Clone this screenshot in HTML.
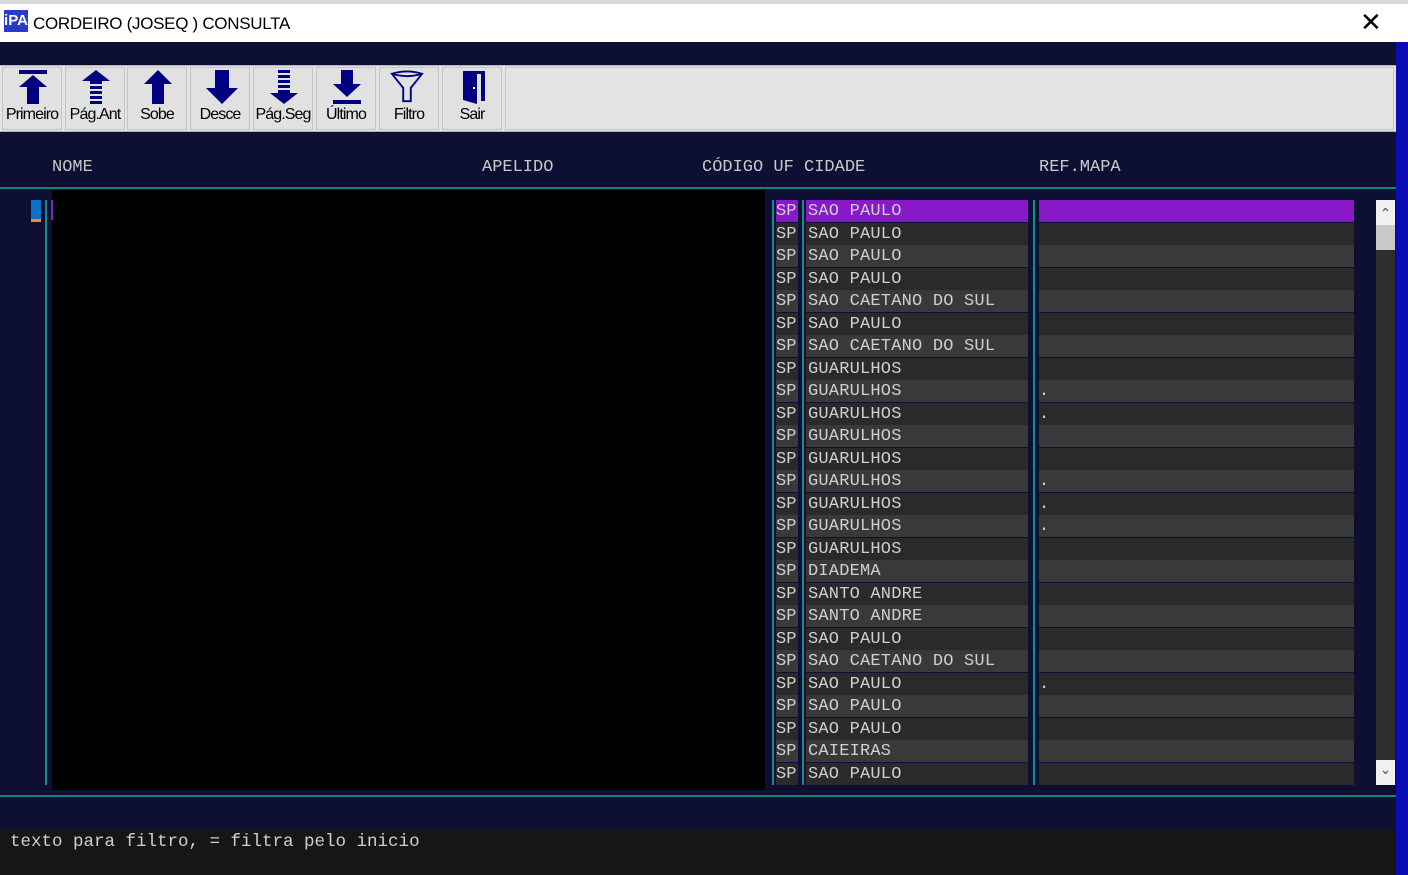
<!DOCTYPE html>
<html><head><meta charset="utf-8"><style>
*{margin:0;padding:0;box-sizing:border-box}
body{width:1408px;height:875px;overflow:hidden;background:#0e1033;position:relative;font-family:"Liberation Mono","DejaVu Sans Mono",monospace}
.abs{position:absolute}
#top{left:0;top:0;width:1408px;height:4px;background:#d8d8d8}
#title{left:0;top:4px;width:1408px;height:38px;background:#fff;font-family:"Liberation Sans",sans-serif;font-size:17px;color:#000}
#blue{left:1396px;top:42px;width:12px;height:833px;background:#0c0cb5}
#tb{left:0;top:65px;width:1396px;height:67px;background:#e4e4e4;border-top:1px solid #b0b0b0;border-bottom:1px solid #b0b0b0}
.btn{position:absolute;top:67px;width:60px;height:63px;background:#e1e1e1;border:1px solid #c4c4c4;font-family:"Liberation Sans",sans-serif;font-size:16px;color:#000;text-align:center;letter-spacing:-0.9px}
.btn svg{position:absolute;left:14px;top:2px}
.btn span{position:absolute;left:0;right:0;top:38px}
.hd{position:absolute;top:158px;color:#c8c8c8;font-size:17px}
.row{position:absolute;height:22px;font-size:17px;color:#cfcfcf;line-height:24px;white-space:pre}
.t{position:absolute;background:#10908a;width:2px}
</style></head><body>
<div class="abs" id="top"></div>
<div class="abs" id="title">
 <div class="abs" style="left:4px;top:6px;width:24px;height:22px;background:#2a3bc6;color:#fff;font-weight:bold;font-size:15px;line-height:22px;text-align:center">iPA</div>
 <div class="abs" style="left:33px;top:10px;letter-spacing:-0.3px">CORDEIRO (JOSEQ ) CONSULTA</div>
 <div class="abs" style="left:1360px;top:3px;font-size:26px;font-weight:300">✕</div>
</div>
<div class="abs" id="blue"></div>
<div class="abs" id="tb"></div>
<div class="abs" style="left:505px;top:67px;width:889px;height:63px;border:1px solid #c4c4c4;background:#e4e4e4"></div>

<div class="btn" style="left:2px"><svg width="32" height="34" viewBox="0 0 32 34"><rect x="2" y="0" width="28" height="4" fill="#000080"/><path d="M16 5 L30 17 L22 17 L22 34 L10 34 L10 17 L2 17Z" fill="#000080"/></svg><span>Primeiro</span></div>
<div class="btn" style="left:65px"><svg width="32" height="34" viewBox="0 0 32 34"><path d="M16 0 L30 11 L22 11 L22 14 L10 14 L10 11 L2 11Z" fill="#000080"/><rect x="10" y="16" width="12" height="3" fill="#000080"/><rect x="10" y="21" width="12" height="3" fill="#000080"/><rect x="10" y="26" width="12" height="3" fill="#000080"/><rect x="10" y="31" width="12" height="3" fill="#000080"/></svg><span>Pág.Ant</span></div>
<div class="btn" style="left:127px"><svg width="32" height="34" viewBox="0 0 32 34"><path d="M16 0 L30 14 L22 14 L22 34 L10 34 L10 14 L2 14Z" fill="#000080"/></svg><span>Sobe</span></div>
<div class="btn" style="left:190px"><svg width="34" height="34" viewBox="0 0 34 34"><path d="M10 0 L24 0 L24 18 L33 18 L17 34 L1 18 L10 18Z" fill="#000080"/></svg><span>Desce</span></div>
<div class="btn" style="left:253px"><svg width="32" height="34" viewBox="0 0 32 34"><rect x="10" y="0" width="12" height="3" fill="#000080"/><rect x="10" y="5" width="12" height="3" fill="#000080"/><rect x="10" y="10" width="12" height="3" fill="#000080"/><rect x="10" y="15" width="12" height="3" fill="#000080"/><path d="M10 20 L22 20 L22 23 L30 23 L16 34 L2 23 L10 23Z" fill="#000080"/></svg><span>Pág.Seg</span></div>
<div class="btn" style="left:316px"><svg width="32" height="34" viewBox="0 0 32 34"><path d="M10 0 L22 0 L22 14 L30 14 L16 27 L2 14 L10 14Z" fill="#000080"/><rect x="2" y="30" width="28" height="4" fill="#000080"/></svg><span>Último</span></div>
<div class="btn" style="left:379px"><svg width="34" height="34" viewBox="-2 0 36 34" style="left:10px"><path d="M0 3 Q16 -2 32 3 L20 18 L20 32 L12 32 L12 18Z M0 3 Q16 8 32 3" fill="none" stroke="#000080" stroke-width="2"/></svg><span>Filtro</span></div>
<div class="btn" style="left:442px"><svg width="32" height="34" viewBox="0 0 32 34"><path d="M6 1 L28 1 L28 31 L24 31 L24 4 L14 4Z" fill="#000080"/><path d="M6 1 L20 4 L20 34 L6 30Z" fill="#000080"/><rect x="16" y="17" width="2" height="2" fill="#fff"/></svg><span>Sair</span></div>

<div class="hd" style="left:52px">NOME</div>
<div class="hd" style="left:482px">APELIDO</div>
<div class="hd" style="left:702px">CÓDIGO UF CIDADE</div>
<div class="hd" style="left:1039px">REF.MAPA</div>
<div class="abs" style="left:0;top:187px;width:1396px;height:2px;background:#10807a"></div>

<div class="abs" style="left:52px;top:190px;width:713px;height:600px;background:#000"></div>
<div class="abs" style="left:31px;top:200px;width:10px;height:22px;background:#0a72c8;border-bottom:3px solid #f08a30"></div>
<div class="t" style="left:45px;top:200px;height:585px"></div>
<div class="abs" style="left:51px;top:200px;width:2px;height:20px;background:#8a20c0"></div>
<div class="t" style="left:772px;top:200px;height:585px"></div>
<div class="t" style="left:802px;top:200px;height:585px"></div>
<div class="t" style="left:1033px;top:200px;height:585px"></div>
<div id="rows"></div>

<div class="abs" style="left:1376px;top:200px;width:19px;height:585px;background:#2e2e2e"></div>
<div class="abs" style="left:1376px;top:200px;width:19px;height:25px;background:#f0f0f0;color:#555;font-size:14px;text-align:center;line-height:28px;font-family:'DejaVu Sans',sans-serif">&#x2303;</div>
<div class="abs" style="left:1376px;top:225px;width:19px;height:25px;background:#c8c8c8"></div>
<div class="abs" style="left:1376px;top:760px;width:19px;height:25px;background:#f0f0f0;color:#555;font-size:14px;text-align:center;line-height:20px;font-family:'DejaVu Sans',sans-serif">&#x2304;</div>

<div class="abs" style="left:0;top:795px;width:1396px;height:2px;background:#10807a"></div>
<div class="abs" style="left:0;top:829px;width:1396px;height:46px;background:#161616"></div>
<div class="abs" style="left:10px;top:830px;font-size:17.5px;color:#cfcfcf;line-height:24px">texto para filtro, = filtra pelo inicio</div>

<script>
var c=["SAO PAULO","SAO PAULO","SAO PAULO","SAO PAULO","SAO CAETANO DO SUL","SAO PAULO","SAO CAETANO DO SUL","GUARULHOS","GUARULHOS","GUARULHOS","GUARULHOS","GUARULHOS","GUARULHOS","GUARULHOS","GUARULHOS","GUARULHOS","DIADEMA","SANTO ANDRE","SANTO ANDRE","SAO PAULO","SAO CAETANO DO SUL","SAO PAULO","SAO PAULO","SAO PAULO","CAIEIRAS","SAO PAULO"];
var dots={8:1,9:1,12:1,13:1,14:1,21:1};
var h="";
for(var i=0;i<26;i++){var y=Math.round(200+i*22.5);var bg=i==0?"#8818c8":(i%2?"#2a2a2a":"#393939");
h+='<div class="row" style="left:776px;top:'+y+'px;width:22px;background:'+bg+'">SP</div>';
h+='<div class="row" style="left:806px;top:'+y+'px;width:222px;background:'+bg+';padding-left:2px;letter-spacing:0.2px">'+c[i]+'</div>';
h+='<div class="row" style="left:1039px;top:'+y+'px;width:315px;background:'+bg+'">'+(dots[i]?'.':'')+'</div>';}
document.getElementById("rows").innerHTML=h;
</script>
</body></html>
